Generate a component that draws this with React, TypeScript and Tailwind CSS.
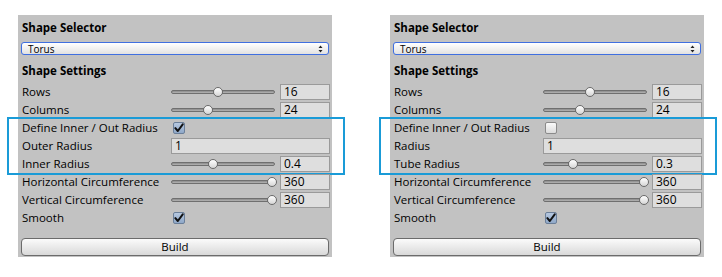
import React from "react";

type Row =
  | { kind: "slider"; label: string; value: string; thumb: number }
  | { kind: "check"; label: string; checked: boolean }
  | { kind: "field"; label: string; value: string };

const Slider = ({ value, thumb }: { value: string; thumb: number }) => (
  <div className="flex items-center">
    <div className="relative h-[18px] w-[104px]">
      <div className="absolute left-0 right-0 top-[7px] h-[4px] rounded-full border border-[#6f6f6f] bg-gradient-to-b from-[#8a8a8a] to-[#b5b5b5]" />
      <div
        className="absolute top-[4px] h-[10px] w-[10px] rounded-full border border-[#6a6a6a] bg-gradient-to-b from-white to-[#d6d6d6]"
        style={{ left: thumb - 5 }}
      />
    </div>
    <div className="ml-[5px] flex h-[16px] w-[50px] items-center border border-[#9a9a9a] bg-[#dedede] pl-[3px] text-[12px] leading-none">
      {value}
    </div>
  </div>
);

const CheckBox = ({ checked }: { checked: boolean }) => (
  <div
    className={`ml-[2px] flex h-[12px] w-[12px] items-center justify-center rounded-[2px] border ${
      checked
        ? "border-[#6b7f99] bg-gradient-to-b from-[#b6c8e0] to-[#8fa8c8]"
        : "border-[#8a8a8a] bg-gradient-to-b from-[#fafafa] to-[#dcdcdc]"
    }`}
  >
    {checked && (
      <svg width="11" height="10" viewBox="0 0 11 10">
        <path d="M1.5 5.2 L4.2 8.3 L9.6 1" fill="none" stroke="#111" strokeWidth="2.2" strokeLinecap="round" strokeLinejoin="round" />
      </svg>
    )}
  </div>
);

const RowView = ({ row }: { row: Row }) => (
  <div className="flex h-[18px] items-center">
    <div className="w-[149px] shrink-0 whitespace-nowrap text-[11.5px] leading-none">{row.label}</div>
    {row.kind === "slider" && <Slider value={row.value} thumb={row.thumb} />}
    {row.kind === "check" && <CheckBox checked={row.checked} />}
    {row.kind === "field" && (
      <div className="flex h-[16px] w-[159px] items-center border border-[#9a9a9a] bg-[#dedede] pl-[3px] text-[12px] leading-none">
        {row.value}
      </div>
    )}
  </div>
);

const Panel = ({ inner }: { inner: boolean }) => {
  const top: Row[] = [
    { kind: "slider", label: "Rows", value: "16", thumb: 47 },
    { kind: "slider", label: "Columns", value: "24", thumb: 37 },
  ];
  const boxed: Row[] = [
    { kind: "check", label: "Define Inner / Out Radius", checked: inner },
    { kind: "field", label: inner ? "Outer Radius" : "Radius", value: "1" },
    inner
      ? { kind: "slider", label: "Inner Radius", value: "0.4", thumb: 42 }
      : { kind: "slider", label: "Tube Radius", value: "0.3", thumb: 30 },
  ];
  const bottom: Row[] = [
    { kind: "slider", label: "Horizontal Circumference", value: "360", thumb: 101 },
    { kind: "slider", label: "Vertical Circumference", value: "360", thumb: 101 },
    { kind: "check", label: "Smooth", checked: true },
  ];

  return (
    <div className="flex w-[314px] flex-col bg-[#c2c2c2] pb-[1px] pt-[4px] text-black">
      <div className="flex h-[18px] items-center whitespace-nowrap pl-[4px] text-[11.5px] font-bold leading-none">Shape Selector</div>
      <div className="mx-[3px] mt-[5px] flex h-[13px] items-center justify-between rounded-[3px] border border-[#3f6fe0] bg-gradient-to-b from-white to-[#e2e2e2] pl-[6px] pr-[5px] text-[10px] leading-none">
        <span>Torus</span>
        <svg width="5" height="8" viewBox="0 0 5 8">
          <path d="M2.5 0.5 L4.5 3 L0.5 3 Z M2.5 7.5 L4.5 5 L0.5 5 Z" fill="#222" />
        </svg>
      </div>
      <div className="mt-[7px] flex h-[18px] items-center whitespace-nowrap pl-[4px] text-[11.5px] font-bold leading-none">Shape Settings</div>
      <div className="mt-[3px] pl-[4px]">
        {top.map((r) => (
          <RowView key={r.label} row={r} />
        ))}
      </div>
      <div className="-my-[2px] -ml-[11px] -mr-[13px] border-2 border-[#1a9bd7] pl-[13px]">
        {boxed.map((r) => (
          <RowView key={r.label} row={r} />
        ))}
      </div>
      <div className="pl-[4px]">
        {bottom.map((r) => (
          <RowView key={r.label} row={r} />
        ))}
      </div>
      <div className="mx-[3px] mt-[11px] flex h-[18px] items-center justify-center rounded-[4px] border border-[#6b6b6b] bg-gradient-to-b from-[#fbfbfb] to-[#d9d9d9] text-[11.5px] leading-none">
        Build
      </div>
    </div>
  );
};

export default function App() {
  return (
    <div
      className="flex h-[277px] w-[722px] items-start gap-[58px] bg-white pl-[18px] pt-[15px]"
      style={{ fontFamily: '"Open Sans", sans-serif' }}
    >
      <Panel inner />
      <Panel inner={false} />
    </div>
  );
}
